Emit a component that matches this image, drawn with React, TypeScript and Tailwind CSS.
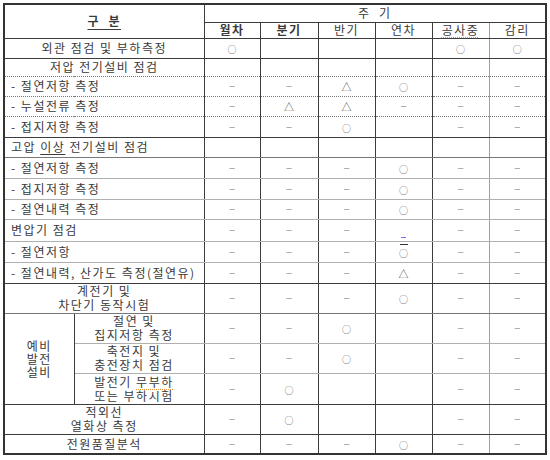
import type { ReactNode } from "react";

const D = "−";
const O = "○";
const T = "△";

type Line = "dark" | "mid" | "gray" | "dot";

const lineCls: Record<Line, string> = {
  dark: "border-b border-b-[#3c3c3c]",
  mid: "border-b border-b-[#777]",
  gray: "border-b border-b-[#b0b0b0]",
  dot: "border-b [border-bottom-style:dotted] border-b-[#777]",
};

interface Row {
  label: ReactNode;
  center?: boolean;
  vals: ReactNode[];
  h: string;
  line: Line;
}

function Mark({ v }: { v: ReactNode }) {
  if (v === O) return <span className="text-[9px] tracking-normal text-[#666]">{O}</span>;
  if (v === T) return <span className="text-[10px] tracking-normal text-[#555]">{T}</span>;
  if (v === D) return <span className="text-[11px] tracking-normal text-[#999]">{D}</span>;
  return <>{v}</>;
}

const cursorMark = (
  <span className="inline-flex translate-y-[4px] flex-col items-center gap-[6px]">
    <span className="block h-px w-[5px] bg-[#6f6fff]" />
    <span className="block h-px w-[8px] bg-[#333]" />
  </span>
);

const topRows: Row[] = [
  { label: "외관 점검 및 부하측정", center: true, vals: [O, "", "", "", O, O], h: "h-[20px]", line: "dark" },
  { label: "저압 전기설비 점검", center: true, vals: ["", "", "", "", "", ""], h: "h-[18px]", line: "dot" },
  { label: "- 절연저항 측정", vals: [D, D, T, O, D, D], h: "h-[20px]", line: "dot" },
  { label: "- 누설전류 측정", vals: [D, T, T, D, D, D], h: "h-[20px]", line: "dot" },
  { label: "- 접지저항 측정", vals: [D, D, O, "", D, D], h: "h-[21px]", line: "dark" },
  {
    label: (
      <>
        고압 <span className="underline underline-offset-2">이상</span> 전기설비 점검
      </>
    ),
    vals: ["", "", "", "", "", ""],
    h: "h-[20px]",
    line: "mid",
  },
  { label: "- 절연저항 측정", vals: [D, D, D, O, D, D], h: "h-[21px]", line: "gray" },
  { label: "- 접지저항 측정", vals: [D, D, D, O, D, D], h: "h-[21px]", line: "gray" },
  { label: "- 절연내력 측정", vals: [D, D, D, O, D, D], h: "h-[20px]", line: "gray" },
  { label: "변압기 점검", vals: [D, D, D, cursorMark, D, D], h: "h-[21px]", line: "gray" },
  { label: "- 절연저항", vals: [D, D, D, O, D, D], h: "h-[21px]", line: "gray" },
  { label: "- 절연내력, 산가도 측정(절연유)", vals: [D, D, D, T, D, D], h: "h-[21px]", line: "dark" },
  {
    label: (
      <>
        계전기 및<br />
        차단기 동작시험
      </>
    ),
    center: true,
    vals: [D, D, D, O, D, D],
    h: "h-[30px]",
    line: "mid",
  },
];

const genRows: Row[] = [
  {
    label: (
      <>
        절연 및<br />
        집지저항 측정
      </>
    ),
    vals: [D, D, O, "", D, D],
    h: "h-[30px]",
    line: "gray",
  },
  {
    label: (
      <>
        축전지 및<br />
        충전장치 점검
      </>
    ),
    vals: [D, D, O, "", D, D],
    h: "h-[30px]",
    line: "gray",
  },
  {
    label: (
      <>
        발전기{" "}
        <span className="underline decoration-dotted decoration-[#e89a3c] underline-offset-2">무부하</span>
        <br />
        또는 부하시험
      </>
    ),
    vals: [D, O, "", "", D, D],
    h: "h-[31px]",
    line: "dark",
  },
];

const bottomRows: Row[] = [
  {
    label: (
      <>
        적외선<br />
        열화상 측정
      </>
    ),
    center: true,
    vals: [D, O, "", "", D, D],
    h: "h-[30px]",
    line: "dark",
  },
  { label: "전원품질분석", center: true, vals: [D, D, D, O, D, D], h: "h-[17px]", line: "dark" },
];

const valCell = (i: number) =>
  i === 4 ? "border-l border-l-[#3c3c3c] border-r border-r-[#a0a0a0]" : "border-x border-x-[#3c3c3c]";

function Vals({ vals, line }: { vals: ReactNode[]; line: Line }) {
  return (
    <>
      {vals.map((v, i) => (
        <td key={i} className={`${valCell(i)} ${lineCls[line]} p-0 text-center align-middle`}>
          <Mark v={v} />
        </td>
      ))}
    </>
  );
}

function PlainRow({ r }: { r: Row }) {
  return (
    <tr className={r.h}>
      <td
        colSpan={2}
        className={`border-x border-x-[#3c3c3c] ${lineCls[r.line]} p-0 align-middle leading-[14px] ${
          r.center ? "text-center" : "pl-[6px] text-left"
        }`}
      >
        {r.label}
      </td>
      <Vals vals={r.vals} line={r.line} />
    </tr>
  );
}

const heads = ["월차", "분기", "반기", "연차", "공사중", "감리"];

export default function App() {
  return (
    <div className="min-h-[460px] w-[550px] bg-white pl-[3px] pt-[3px] font-[family-name:'Noto_Sans_CJK_KR','Noto_Sans',sans-serif] text-[12px] tracking-[1.5px] text-[#3a3a3a]">
      <table className="w-[542px] table-fixed border-collapse border-2 border-[#333]">
        <colgroup>
          <col className="w-[70px]" />
          <col className="w-[130px]" />
          <col className="w-[56px]" />
          <col className="w-[58px]" />
          <col className="w-[57px]" />
          <col className="w-[57px]" />
          <col className="w-[57px]" />
          <col className="w-[57px]" />
        </colgroup>
        <tbody>
          <tr className="h-[18px]">
            <td
              colSpan={2}
              rowSpan={2}
              className="border-x border-x-[#3c3c3c] border-b border-b-[#3c3c3c] p-0 text-center align-middle font-bold"
            >
              <span className="underline underline-offset-[3px]">구&nbsp;&nbsp;분</span>
            </td>
            <td colSpan={6} className="border-b border-b-[#3c3c3c] p-0 text-center align-middle leading-none">
              주&nbsp;&nbsp;기
            </td>
          </tr>
          <tr className="h-[16px]">
            {heads.map((h, i) => (
              <td
                key={h}
                className={`${valCell(i)} border-b border-b-[#3c3c3c] p-0 text-center align-middle leading-none ${
                  i < 2 ? "font-bold" : ""
                }`}
              >
                {h === "공사중" ? (
                  <span className="underline decoration-dotted decoration-[#e89a3c] underline-offset-2">{h}</span>
                ) : (
                  h
                )}
              </td>
            ))}
          </tr>
          {topRows.map((r, i) => (
            <PlainRow key={`t${i}`} r={r} />
          ))}
          {genRows.map((r, i) => (
            <tr key={`g${i}`} className={r.h}>
              {i === 0 && (
                <td
                  rowSpan={3}
                  className="border-x border-x-[#3c3c3c] border-b border-b-[#3c3c3c] p-0 text-center align-middle leading-[13px]"
                >
                  예비
                  <br />
                  발전
                  <br />
                  설비
                </td>
              )}
              <td
                className={`border-x border-x-[#3c3c3c] ${lineCls[r.line]} p-0 pr-[10px] text-center align-middle leading-[14px]`}
              >
                {r.label}
              </td>
              <Vals vals={r.vals} line={r.line} />
            </tr>
          ))}
          {bottomRows.map((r, i) => (
            <PlainRow key={`b${i}`} r={r} />
          ))}
        </tbody>
      </table>
    </div>
  );
}
